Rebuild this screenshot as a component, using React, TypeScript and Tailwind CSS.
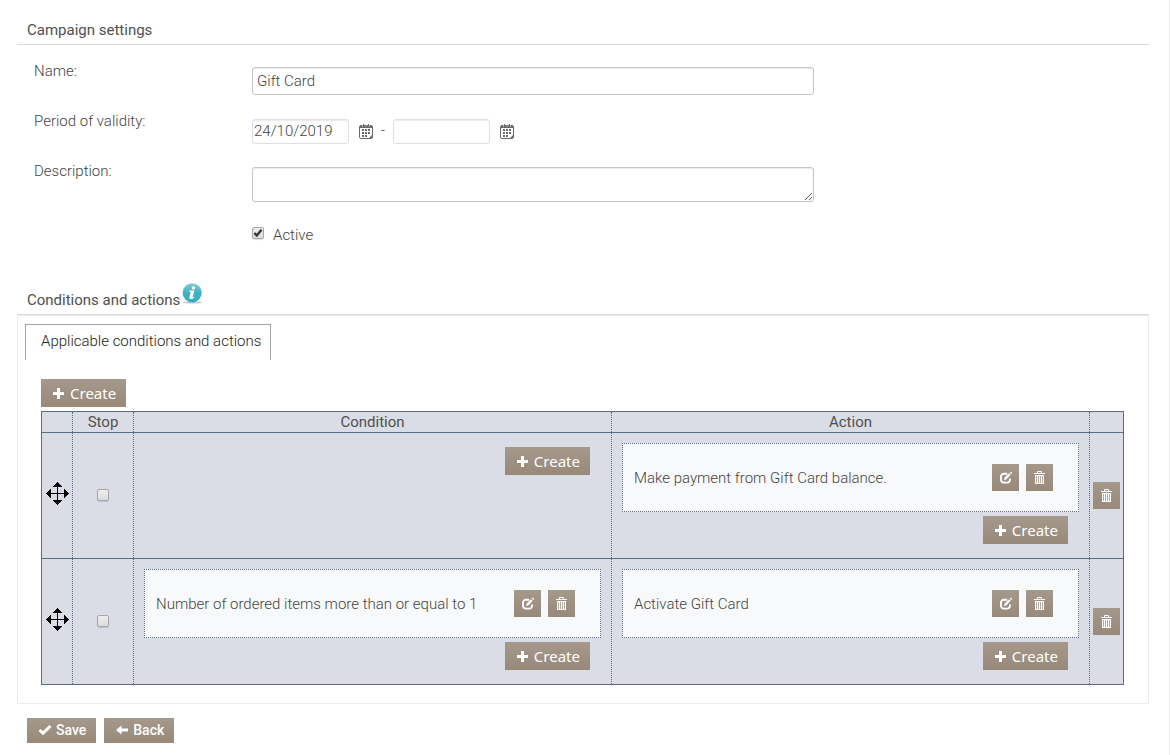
import { useState } from "react";
import type { ReactNode } from "react";

function PlusIcon() {
  return (
    <svg width="13" height="13" viewBox="0 0 13 13" fill="#fff" aria-hidden="true">
      <path d="M5 1h3v4h4v3H8v4H5V8H1V5h4z" />
    </svg>
  );
}

function EditIcon() {
  return (
    <svg width="15" height="15" viewBox="0 0 15 15" fill="none" aria-hidden="true">
      <path d="M9.200 3.800H5.800A2.800 2.800 0 0 0 3 6.600v3.200a2.800 2.800 0 0 0 2.800 2.800h3.400a2.800 2.800 0 0 0 2.800-2.800V8.600" stroke="#fff" strokeWidth="1.900" />
      <path d="M11 3.200l1.600 1.500-4.100 4.600-2.700 1 .9-2.700z" fill="#fff" />
      <path d="M12.700 1.500l1.600 1.500-1 1-1.600-1.500z" fill="#fff" />
    </svg>
  );
}

function TrashIcon() {
  return (
    <svg width="13" height="15" viewBox="0 0 13 15" fill="none" aria-hidden="true">
      <path d="M4.500 3V1.500h4V3" stroke="#fff" strokeWidth="1" />
      <path d="M1 3h11v1H1z" fill="#fff" />
      <path d="M2 5h9v9H2z" fill="#fff" />
      <path d="M4 6v7M6 6v7M8 6v7M10 6v7" transform="translate(-0.500 0)" stroke="#a09385" strokeWidth="0.800" />
    </svg>
  );
}

function MoveIcon() {
  return (
    <svg width="23" height="23" viewBox="0 0 23 23" fill="#000" shapeRendering="crispEdges" aria-hidden="true">
      <path d="M11 4h1v7h7v1h-7v7h-1v-7H4v-1h7z" />
      <path d="M11.500 0L16 5H7zM11.500 23L7 18h9zM0 11.500L5 7v9zM23 11.500L18 16V7z" />
    </svg>
  );
}

function CalendarIcon() {
  return (
    <svg width="14" height="15" viewBox="0 0 14 15" fill="none" aria-hidden="true">
      <rect x="0.500" y="1.500" width="13" height="13" rx="1.500" stroke="#6a6a6a" />
      <path d="M1 1.500h12V4H1z" fill="#6a6a6a" />
      <path d="M4.500 0v2M9.500 0v2" stroke="#6a6a6a" />
      <path d="M3 1.500h1v1H3zM6.500 1.500h1v1h-1zM10 1.500h1v1h-1z" fill="#fff" />
      <path d="M3 5h2v2H3zM6 5h2v2H6zM9 5h2v2H9zM3 8h2v2H3zM6 8h2v2H6zM9 8h2v2H9zM3 11h2v2H3zM6 11h2v2H6zM13 11v3h-3z" fill="#6a6a6a" />
    </svg>
  );
}

function InfoIcon() {
  return (
    <svg width="21" height="21" viewBox="0 0 21 21" aria-hidden="true">
      <defs>
        <linearGradient id="info-fill" x1="0" y1="0" x2="0" y2="1">
          <stop offset="0" stopColor="#8accd4" />
          <stop offset="0.5" stopColor="#3fb0c2" />
          <stop offset="1" stopColor="#2fb0c4" />
        </linearGradient>
      </defs>
      <ellipse cx="10.5" cy="19.3" rx="10" ry="1.2" fill="#c9c9c9" />
      <circle cx="10.2" cy="9.8" r="9.6" fill="url(#info-fill)" />
      <circle cx="11.5" cy="4.9" r="1.7" fill="#fff" />
      <path d="M7.400 7.600h5l-1.700 6.400c0 .6.700.4 1.600-.3l.3.600c-1.200 1.300-2.400 1.800-3.600 1.800-1.400 0-1.900-.7-1.600-1.900L8.800 8.700H7.200z" fill="#fff" />
    </svg>
  );
}

function SaveIcon() {
  return (
    <svg width="14" height="12" viewBox="0 0 14 12" aria-hidden="true">
      <path d="M1.500 6L5 9.200L12.500 2" stroke="#fff" strokeWidth="3" fill="none" />
    </svg>
  );
}

function BackIcon() {
  return (
    <svg width="14" height="12" viewBox="0 0 14 12" fill="#fff" aria-hidden="true">
      <path d="M1 6l5.500-4.500v3H13v3H6.500v3z" />
    </svg>
  );
}

const face = "bg-linear-to-b from-[#a5998c] to-[#988979] text-white";

function CreateButton() {
  return (
    <button type="button" className={`${face} flex h-7 items-center gap-[5px] pr-2.5 pl-[11px] font-['Noto_Sans',sans-serif] text-[15px] leading-7 font-normal`}>
      <PlusIcon />
      Create
    </button>
  );
}

function IconButton({ label, children }: { label: string; children: ReactNode }) {
  return (
    <button type="button" aria-label={label} className={`${face} flex size-[27px] shrink-0 items-center justify-center`}>
      {children}
    </button>
  );
}

function CheckBox({ id, label, initial = false }: { id: string; label?: string; initial?: boolean }) {
  const [on, setOn] = useState(initial);
  return (
    <span className="grid size-3 shrink-0">
      <input
        id={id}
        type="checkbox"
        aria-label={label}
        checked={on}
        onChange={(e) => setOn(e.target.checked)}
        className="col-start-1 row-start-1 size-3 appearance-none rounded-[2px] border border-[#a6a6a6] bg-linear-to-b from-[#eeeeee] to-[#dcdcdc] shadow-[0_1px_1px_rgba(0,0,0,0.12)]"
      />
      {on && (
        <svg viewBox="0 0 12 12" className="pointer-events-none col-start-1 row-start-1 size-3" aria-hidden="true">
          <path d="M2.300 6L4.800 8.400L9.500 2.800" stroke="#333" strokeWidth="2.400" fill="none" />
        </svg>
      )}
    </span>
  );
}

function RuleCard({ text }: { text: string }) {
  return (
    <div className="flex h-[69px] items-center gap-[7px] border border-dotted border-[#5b6b82] bg-[#f8f9fb] pr-[25px] pl-[11px]">
      <p className="flex-1">{text}</p>
      <IconButton label="Edit"><EditIcon /></IconButton>
      <IconButton label="Delete"><TrashIcon /></IconButton>
    </div>
  );
}

const dotted = "border-x border-dotted border-[#5b6b82]";

function RuleCell({ text }: { text?: string }) {
  return (
    <td className={`${dotted} px-2.5 pt-2.5 pb-3.5 align-top`}>
      {text && <RuleCard text={text} />}
      <div className="mt-1 mr-[11px] flex justify-end">
        <CreateButton />
      </div>
    </td>
  );
}

const rules = [
  { id: 1, condition: undefined, action: "Make payment from Gift Card balance." },
  { id: 2, condition: "Number of ordered items more than or equal to 1", action: "Activate Gift Card" },
];

const field = "rounded-[3px] border bg-white shadow-[inset_0_1px_1px_rgba(0,0,0,0.08)] outline-none";
const dateField = `${field} h-[25px] w-[97px] border-[#e0e0e0] px-px pb-0.5`;
const formButton = `${face} flex h-[25px] items-center gap-1 pr-2.5 pb-px pl-[11px]`;

export default function App() {
  return (
    <main className="min-h-screen border-r border-[#ececec] bg-white pt-5 pr-5 pb-3 pl-[17px] font-[Roboto,sans-serif] text-[15px] leading-5 font-light text-[#444]">
      <h2 className="border-b border-[#d9d9d9] pb-1 pl-2.5 font-normal text-[#505050]">Campaign settings</h2>

      <form className="grid grid-cols-[218px_minmax(0,562px)] pt-4 pl-[17px]">
        <label htmlFor="name">Name:</label>
        <div className="h-[50px] pt-1.5">
          <input id="name" type="text" defaultValue="Gift Card" className={`${field} h-7 w-full border-[#c4c4c4] px-1`} />
        </div>

        <label htmlFor="valid-from">Period of validity:</label>
        <div className="flex h-[50px] items-start pt-2">
          <input id="valid-from" type="text" defaultValue="24/10/2019" className={dateField} />
          <button type="button" aria-label="Pick start date" className="mt-[5px] ml-2.5"><CalendarIcon /></button>
          <span className="w-5 pt-px text-center">-</span>
          <input type="text" aria-label="Valid until" className={dateField} />
          <button type="button" aria-label="Pick end date" className="mt-[5px] ml-2.5"><CalendarIcon /></button>
        </div>

        <label htmlFor="description">Description:</label>
        <div className="h-16 pt-1.5">
          <textarea id="description" className={`${field} block h-[35px] w-full resize border-[#c4c4c4] px-1`} />
        </div>

        <div className="col-start-2 flex items-start gap-[9px]">
          <div className="pt-0.5"><CheckBox id="active" initial /></div>
          <label htmlFor="active">Active</label>
        </div>
      </form>

      <section className="pt-[38px]">
        <div className="flex h-8 items-start gap-0.5 border-b border-[#d9d9d9] pl-2.5">
          <h2 className="pt-[7px] font-normal text-[#505050]">Conditions and actions</h2>
          <InfoIcon />
        </div>

        <div className="border border-[#ececec] pt-2 pr-6 pb-[18px] pl-[7px]">
          <div role="tablist" className="flex">
            <button type="button" role="tab" aria-selected="true" className="h-9 border border-b-0 border-[#a3a3a3] pr-[9px] pb-1 pl-[15px] text-[#222]">
              Applicable conditions and actions
            </button>
          </div>

          <div className="pt-[19px] pl-4">
            <CreateButton />
            <table className="mt-1 w-full table-fixed border-collapse border border-[#5b6b82] bg-[#dadde5]">
              <colgroup>
                <col className="w-[31px]" />
                <col className="w-[61px]" />
                <col />
                <col />
                <col className="w-[34px]" />
              </colgroup>
              <thead>
                <tr className="border-y border-[#5b6b82] text-[#505050]">
                  <td />
                  <th scope="col" className={`${dotted} font-normal`}>Stop</th>
                  <th scope="col" className={`${dotted} font-normal`}>Condition</th>
                  <th scope="col" className={`${dotted} font-normal`}>Action</th>
                  <td />
                </tr>
              </thead>
              <tbody>
                {rules.map((rule) => (
                  <tr key={rule.id} className="border-y border-[#5b6b82]">
                    <td className="pb-1">
                      <button type="button" aria-label="Move rule" className="flex w-full cursor-move justify-center">
                        <MoveIcon />
                      </button>
                    </td>
                    <td className={`${dotted} pb-0.5`}>
                      <div className="flex justify-center">
                        <CheckBox id={`stop-${rule.id}`} label="Stop" />
                      </div>
                    </td>
                    <RuleCell text={rule.condition} />
                    <RuleCell text={rule.action} />
                    <td>
                      <div className="flex justify-center">
                        <IconButton label="Delete rule"><TrashIcon /></IconButton>
                      </div>
                    </td>
                  </tr>
                ))}
              </tbody>
            </table>
          </div>
        </div>
      </section>

      <div className="flex gap-2 pt-3.5 pl-2.5 text-sm font-medium">
        <button type="button" className={formButton}><SaveIcon />Save</button>
        <button type="button" className={formButton}><BackIcon />Back</button>
      </div>
    </main>
  );
}
